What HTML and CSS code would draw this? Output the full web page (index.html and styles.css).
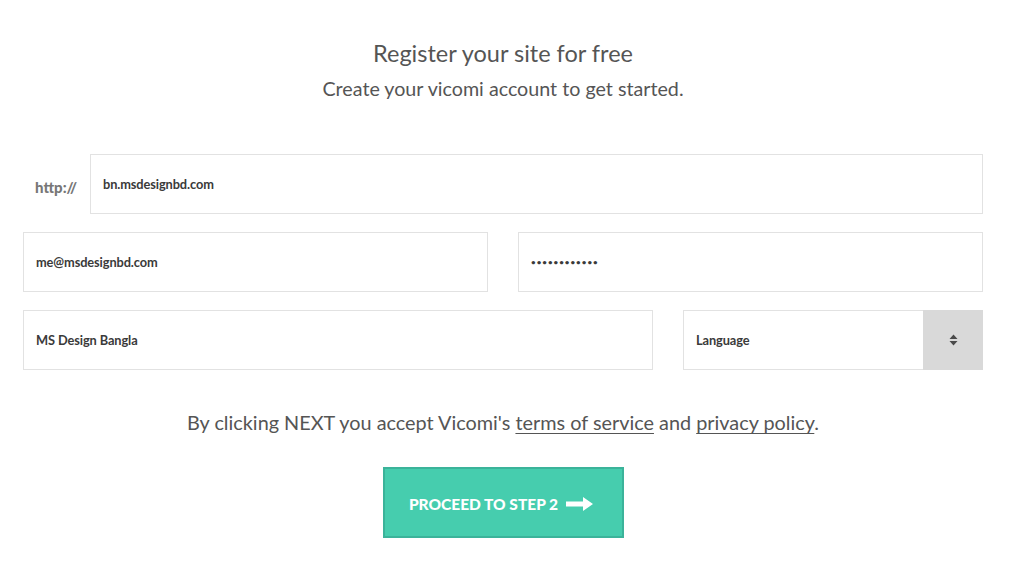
FILE: index.html
```html
<!DOCTYPE html>
<html lang="en">
<head>
<meta charset="utf-8">
<title>Register your site for free</title>
<link rel="stylesheet" href="styles.css">
</head>
<body>
<main class="page">
  <header class="intro">
    <h1 class="title">Register your site for free</h1>
    <p class="subtitle">Create your vicomi account to get started.</p>
  </header>
  <form class="form">
    <div class="row row-url">
      <span class="prefix">http://</span>
      <div class="field grow"><span class="value">bn.msdesignbd.com</span></div>
    </div>
    <div class="row row-half">
      <div class="field"><span class="value">me@msdesignbd.com</span></div>
      <div class="field"><span class="value dots">••••••••••••</span></div>
    </div>
    <div class="row row-wide">
      <div class="field"><span class="value">MS Design Bangla</span></div>
      <div class="field select">
        <span class="value">Language</span>
        <span class="select-btn">
          <svg width="9" height="12" viewBox="0 0 9 12"><path d="M4.5 0.5 L8.5 5 H0.5 Z M0.5 7 H8.5 L4.5 11.5 Z" fill="#4a4a4a"/></svg>
        </span>
      </div>
    </div>
  </form>
  <p class="terms">By clicking NEXT you accept Vicomi's <a href="#">terms of service</a> and <a href="#">privacy policy</a>.</p>
  <div class="actions">
    <button class="btn" type="button">PROCEED TO STEP 2
      <svg class="arrow" width="27" height="14" viewBox="0 0 27 14"><path d="M0 4.5 H17 V0 L27 7 L17 14 V9.5 H0 Z" fill="#fff"/></svg>
    </button>
  </div>
</main>
</body>
</html>
```
FILE: styles.css
```css
* { box-sizing: border-box; }
html, body { margin: 0; padding: 0; background: #fff; }
body { font-family: "Lato", "Open Sans", sans-serif; color: #444; }
.page { width: 960px; margin: 0 0 0 23px; padding-top: 38px; }
.intro { text-align: center; }
.title { margin: 0; font-weight: 400; font-size: 23.5px; line-height: 30px; color: #555; }
.subtitle { margin: 9px 0 0; font-weight: 400; font-size: 19.7px; line-height: 24px; color: #555; }
.form { margin-top: 53px; display: flex; flex-direction: column; gap: 18px; }
.row { display: flex; gap: 30px; }
.row-url { gap: 0; align-items: center; }
.prefix { width: 67px; padding-left: 12px; font-weight: 900; font-size: 15px; color: #777; padding-top: 5px; }
.field { height: 60px; border: 1px solid #e2e2e2; display: flex; align-items: center; padding-left: 12px; background: #fff; }
.grow { flex: 1; }
.row-half .field { flex: 1; }
.row-wide .field:first-child { width: 630px; }
.row-wide .field.select { width: 300px; padding-right: 0; }
.value { font-weight: 700; font-size: 12.8px; color: #3a3a3a; letter-spacing: -0.1px; }
.dots { letter-spacing: 1px; font-size: 8px; }
.select .value { flex: 1; }
.select-btn { width: 60px; height: 60px; margin: -1px -1px -1px 0; background: #d9d9d9; display: flex; align-items: center; justify-content: center; }
.terms { margin: 40px 0 0; text-align: center; font-weight: 400; font-size: 19.85px; line-height: 24px; color: #555; }
.terms a { color: #555; text-decoration: underline; text-underline-offset: 3px; }
.actions { display: flex; justify-content: center; margin-top: 33px; }
.btn { width: 241px; height: 71px; background: #46cdae; border: 2px solid #3bb39a; color: #fff; font-family: "Lato", sans-serif; font-weight: 900; font-size: 15.5px; display: flex; align-items: center; justify-content: center; gap: 8px; padding: 3px 4px 0 0; cursor: pointer; }
.arrow { margin-top: -1px; }
```
